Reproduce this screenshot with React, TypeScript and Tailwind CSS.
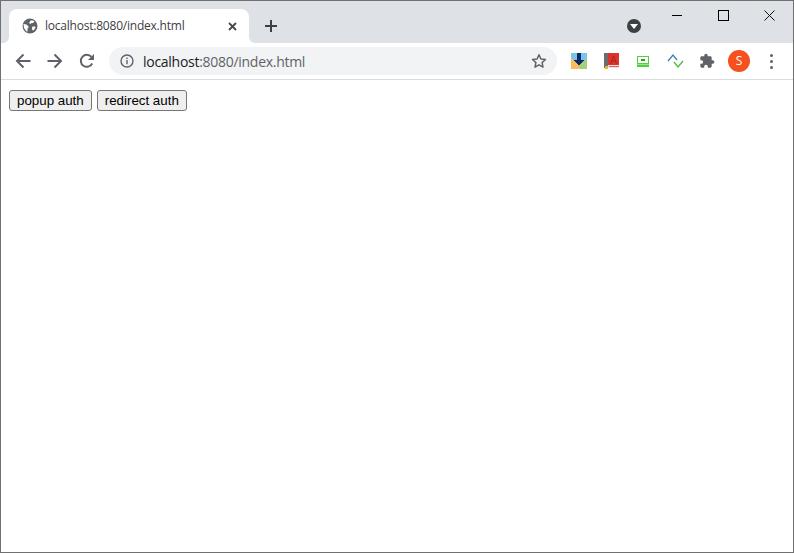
import React from 'react';

const SANS = "font-['Open_Sans','Liberation_Sans',sans-serif]";

const Globe = () => (
  <svg width="16" height="16" viewBox="0 0 16 16">
    <circle cx="8" cy="8" r="7.500" fill="#5f6368" />
    <path d="M1.500 6l3 .5 2 2v1l-1 1v3l-1 0-2.500-3.500zM8.500 2.500l2.500 0 1.500 1-1.500 1.500h-1.500l-1 1-1.500-1 1-1.500zM10.500 8.500l2.500 0 .5 1-1.500 2.500-1.500 .5-.5-2.500z" fill="#fff" />
  </svg>
);

const ExtDownload = () => (
  <svg width="16" height="16" viewBox="0 0 16 16" shapeRendering="crispEdges">
    <rect width="16" height="16" fill="#7cc4ea" />
    <path d="M0 16V5l7 6 3 5z" fill="#f9bd5c" />
    <path d="M8 11l8-5v10H10z" fill="#a4d07a" />
    <path d="M6 0h4v7h3l-5 6-5-6h3z" fill="#0d2c66" />
  </svg>
);

const ExtBook = () => (
  <svg width="15" height="16" viewBox="0 0 15 16">
    <rect width="4" height="15" fill="#6d6d6d" />
    <rect x="4" width="11" height="12" fill="#d9352c" />
    <path d="M6.500 11L9.500 2.500l3 8.500M7.500 8h4" stroke="#a8281f" fill="none" />
    <rect x="4" y="12" width="11" height="3" fill="#f6dedb" />
    <rect x="5" y="13" width="10" height="1" fill="#d9655c" />
    <rect x="1" y="13" width="3" height="3" fill="#f2b233" />
  </svg>
);

const ExtScreen = () => (
  <svg width="12" height="11" viewBox="0 0 12 11" shapeRendering="crispEdges">
    <rect x="0.500" y="0.500" width="11" height="7" fill="#fff" stroke="#4bd33b" />
    <rect x="4" y="3" width="4" height="2" fill="#2f9e25" />
    <rect x="0" y="8" width="12" height="1" fill="#9be58f" />
    <rect x="0" y="9" width="12" height="2" fill="#4bd33b" />
  </svg>
);

const ExtChevrons = () => (
  <svg width="17" height="16" viewBox="0 0 17 16" fill="none" strokeWidth="1.400">
    <path d="M1 8l5-6 4 5" stroke="#4a7fb5" />
    <path d="M7 9l4 5 5-6" stroke="#4cc23a" />
  </svg>
);

const Puzzle = () => (
  <svg width="16" height="16" viewBox="0 0 24 24" fill="#5f6368">
    <path d="M20.500 11H19V7c0-1.100-.9-2-2-2h-4V3.500C13 2.120 11.880 1 10.500 1S8 2.120 8 3.500V5H4c-1.100 0-1.990.9-1.990 2v3.800H3.500c1.490 0 2.700 1.210 2.700 2.700s-1.210 2.700-2.700 2.700H2V20c0 1.100.9 2 2 2h3.800v-1.500c0-1.490 1.210-2.700 2.700-2.700 1.490 0 2.700 1.210 2.700 2.700V22H17c1.100 0 2-.9 2-2v-4h1.500c1.380 0 2.500-1.120 2.500-2.500S21.880 11 20.500 11z" />
  </svg>
);

const Arrow = ({ flip }: { flip?: boolean }) => (
  <svg width="16" height="16" viewBox="0 0 16 16" fill="none" stroke="#5f6368" strokeWidth="2" className={flip ? 'rotate-180' : ''}>
    <path d="M15.500 8H2M8.500 1.500L2 8l6.500 6.500" />
  </svg>
);

const Reload = () => (
  <svg width="16" height="16" viewBox="0 0 16 16" fill="none">
    <path d="M13.200 10.500A6 6 0 1 1 12.400 3.900" stroke="#5f6368" strokeWidth="2" />
    <path d="M15 1v6H9z" fill="#5f6368" />
  </svg>
);

const Info = () => (
  <svg width="14" height="14" viewBox="0 0 14 14" fill="none">
    <circle cx="7" cy="7" r="6" stroke="#5f6368" strokeWidth="1.400" />
    <rect x="6.300" y="6" width="1.400" height="4.200" fill="#5f6368" />
    <rect x="6.300" y="3.600" width="1.400" height="1.400" fill="#5f6368" />
  </svg>
);

const Star = () => (
  <svg width="16" height="16" viewBox="0 0 16 16" fill="none" stroke="#5f6368" strokeWidth="1.500" strokeLinejoin="round">
    <path d="M8 1.800l1.900 4.200 4.600.5-3.400 3.100.9 4.500L8 11.800l-4 2.300.9-4.500L1.500 6.500l4.600-.5z" />
  </svg>
);

export default function App() {
  return (
    <div className={`flex h-[553px] w-[794px] flex-col overflow-hidden border border-[#707070] bg-white ${SANS}`}>
      <div className="flex h-[42px] items-end bg-[#dee1e6] pl-2">
        <div className="relative flex h-[34px] w-[240px] items-center rounded-t-[8px] bg-white pl-[13px] pr-[12px]">
          <svg width="6" height="6" viewBox="0 0 6 6" className="absolute bottom-0 left-[-6px]">
            <path d="M6 0v6H0a6 6 0 0 0 6-6z" fill="#fff" />
          </svg>
          <svg width="6" height="6" viewBox="0 0 6 6" className="absolute bottom-0 right-[-6px]">
            <path d="M0 0v6h6a6 6 0 0 1-6-6z" fill="#fff" />
          </svg>
          <Globe />
          <span className="ml-[7px] flex-1 text-[12px] tracking-[-0.22px] text-[#3c4043]">localhost:8080/index.html</span>
          <svg width="9" height="9" viewBox="0 0 9 9" stroke="#45484c" strokeWidth="1.800">
            <path d="M1 1l7 7M8 1l-7 7" />
          </svg>
        </div>
        <div className="ml-[15px] flex h-[34px] w-[14px] items-center">
          <svg width="14" height="14" viewBox="0 0 14 14" stroke="#3c4043" strokeWidth="2">
            <path d="M7 1v12M1 7h12" />
          </svg>
        </div>
        <div className="ml-[349px] flex h-[34px] w-[14px] items-center">
          <div className="flex h-[14px] w-[14px] items-center justify-center rounded-full bg-[#3c4043]">
            <div className="mt-[1px] h-0 w-0 border-x-[4px] border-t-[5px] border-x-transparent border-t-white" />
          </div>
        </div>
        <div className="ml-[31px] flex h-[41px] items-start pt-[8px]">
          <div className="mt-[5px] h-[1px] w-[10px] bg-black" />
          <div className="ml-[36px] h-[11px] w-[11px] border border-black" />
          <svg width="11" height="11" viewBox="0 0 11 11" stroke="#111" className="ml-[35px]">
            <path d="M0.500 0.500l10 10M10.500 0.500l-10 10" />
          </svg>
        </div>
      </div>

      <div className="flex h-[37px] items-center border-b border-[#dadce0] bg-white pl-[14px]">
        <Arrow />
        <div className="ml-4"><Arrow flip /></div>
        <div className="ml-4"><Reload /></div>
        <div className="ml-[14px] flex h-[28px] w-[448px] items-center rounded-full bg-[#f1f3f4] pl-[11px] pr-[10px]">
          <Info />
          <span className="ml-[9px] flex-1 text-[14px] tracking-[-0.28px] text-[#202124]">
            localhost<span className="text-[#5f6368]">:8080/index.html</span>
          </span>
          <Star />
        </div>
        <div className="ml-[14px] flex w-[16px] justify-center"><ExtDownload /></div>
        <div className="ml-[16px] flex w-[16px] justify-center"><ExtBook /></div>
        <div className="ml-[16px] flex w-[16px] justify-center"><ExtScreen /></div>
        <div className="ml-[16px] flex w-[17px] justify-center"><ExtChevrons /></div>
        <div className="ml-[15px] flex w-[16px] justify-center"><Puzzle /></div>
        <div className="ml-[13px] flex h-[22px] w-[22px] items-center justify-center rounded-full bg-[#f4511e] text-[12px] text-white">S</div>
        <div className="ml-[20px] flex w-[4px] flex-col gap-[3px]">
          <div className="h-[3px] w-[3px] rounded-full bg-[#5f6368]" />
          <div className="h-[3px] w-[3px] rounded-full bg-[#5f6368]" />
          <div className="h-[3px] w-[3px] rounded-full bg-[#5f6368]" />
        </div>
      </div>

      <div className="flex gap-[5px] pl-2 pt-[10px] font-['Liberation_Sans',sans-serif] text-[13.333px] text-black">
        <button className="h-[21px] rounded-[3px] border border-[#767676] bg-[#efefef] px-[7px]">popup auth</button>
        <button className="h-[21px] rounded-[3px] border border-[#767676] bg-[#efefef] px-[7px]">redirect auth</button>
      </div>
    </div>
  );
}
